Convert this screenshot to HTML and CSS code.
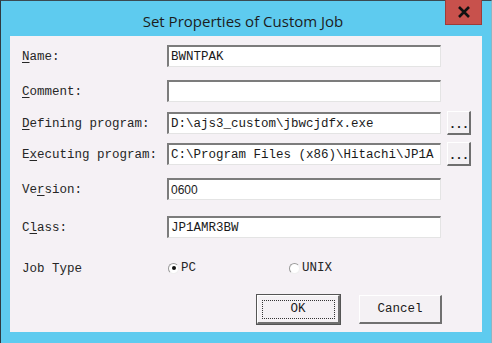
FILE: index.html
```html
<!DOCTYPE html>
<html>
<head>
<meta charset="utf-8">
<link rel="stylesheet" href="styles.css">
</head>
<body>
<div class="window">
  <div class="titlebar">
    <span class="title">Set Properties of Custom Job</span>
    <div class="close">
      <svg width="14" height="12" viewBox="0 0 14 12"><path d="M2 1 L12 11 M12 1 L2 11" stroke="#111" stroke-width="2.6" fill="none"/></svg>
    </div>
  </div>
  <div class="client">
    <div class="row r1">
      <label class="lbl"><u>N</u>ame:</label>
      <div class="field mono">BWNTPAK</div>
    </div>
    <div class="row r2">
      <label class="lbl"><u>C</u>omment:</label>
      <div class="field mono"></div>
    </div>
    <div class="row r3">
      <label class="lbl"><u>D</u>efining program:</label>
      <div class="field mono">D:\ajs3_custom\jbwcjdfx.exe</div>
      <div class="browse">...</div>
    </div>
    <div class="row r4">
      <label class="lbl">E<u>x</u>ecuting program:</label>
      <div class="field mono">C:\Program Files (x86)\Hitachi\JP1A</div>
      <div class="browse">...</div>
    </div>
    <div class="row r5">
      <label class="lbl">Ve<u>r</u>sion:</label>
      <div class="field sans">0600</div>
    </div>
    <div class="row r6">
      <label class="lbl">C<u>l</u>ass:</label>
      <div class="field mono">JP1AMR3BW</div>
    </div>
    <div class="row jobtype">
      <span class="lbl">Job Type</span>
      <div class="radios">
        <span class="radio"><span class="dot on"></span>PC</span>
        <span class="radio"><span class="dot"></span>UNIX</span>
      </div>
    </div>
    <div class="buttons">
      <div class="btn default"><span class="focus">OK</span></div>
      <div class="btn">Cancel</div>
    </div>
  </div>
</div>
</body>
</html>
```

FILE: styles.css
```css
html, body {
  margin: 0;
  padding: 0;
  background: #ffffff;
}

.window {
  width: 490px;
  height: 342px;
  background: #5ecbef;
  border-left: 1px solid #2e3a40;
  border-top: 1px solid #3a4a52;
  border-right: 1px solid #8ab7c8;
  display: flex;
  flex-direction: column;
}

.titlebar {
  height: 35px;
  position: relative;
  display: flex;
  align-items: center;
  justify-content: center;
}

.title {
  font-family: "Open Sans", "Noto Sans", sans-serif;
  font-size: 15px;
  color: #1c1c1c;
  margin-top: 4px;
  margin-left: -6px;
}

.close {
  position: absolute;
  top: -1px;
  left: 444px;
  width: 37px;
  height: 25px;
  background: #c8514c;
  border: 1px solid #9e3b38;
  border-top: none;
  display: flex;
  align-items: center;
  justify-content: center;
  box-sizing: border-box;
}

.client {
  margin: 0 9px 0 9px;
  height: 296px;
  background: #f5f1f5;
  padding: 9px 0 0 12px;
  box-sizing: border-box;
  font-family: "Liberation Mono", "Courier New", monospace;
  font-size: 12.5px;
  color: #262626;
}

.row {
  display: flex;
  align-items: center;
  height: 22px;
}

.r1 { margin-top: 0; }
.r2 { margin-top: 13px; }
.r3 { margin-top: 10px; }
.r4 { margin-top: 9px; }
.r5 { margin-top: 13px; }
.r6 { margin-top: 16px; }

.lbl {
  width: 145px;
  flex: none;
  white-space: nowrap;
  padding-top: 1px;
}

.lbl u {
  text-decoration-thickness: 1px;
  text-underline-offset: 2px;
}

.field {
  width: 274px;
  height: 22px;
  box-sizing: border-box;
  background: #ffffff;
  border-top: 2px solid #7c7c7c;
  border-left: 2px solid #7c7c7c;
  border-right: 1px solid #e4e4e4;
  border-bottom: 1px solid #e4e4e4;
  padding: 1px 2px 0 2px;
  line-height: 18px;
  white-space: nowrap;
  overflow: hidden;
  color: #1a1a1a;
}

.sans {
  font-family: "Liberation Sans", Arial, sans-serif;
  font-size: 12px;
}

.browse {
  margin-left: 6px;
  width: 24px;
  height: 24px;
  box-sizing: border-box;
  background: #f3f0f3;
  border-top: 1px solid #ffffff;
  border-left: 1px solid #ffffff;
  border-right: 2px solid #6f6f6f;
  border-bottom: 2px solid #6f6f6f;
  display: flex;
  align-items: flex-end;
  justify-content: center;
  line-height: 16px;
  font-weight: bold;
  letter-spacing: -1px;
  color: #1a1a1a;
}

.jobtype {
  margin-top: 22px;
  height: 16px;
}

.radios {
  display: flex;
  margin-left: 1px;
}

.radio {
  display: flex;
  align-items: center;
  width: 121px;
}

.dot {
  width: 11px;
  height: 11px;
  box-sizing: border-box;
  border-radius: 50%;
  border: 1px solid #9a9a9a;
  border-right-color: #f0f0f0;
  border-bottom-color: #f0f0f0;
  background: #ffffff;
  margin-right: 2px;
  position: relative;
}

.dot.on::after {
  content: "";
  position: absolute;
  left: 2.5px;
  top: 2.5px;
  width: 4px;
  height: 4px;
  border-radius: 50%;
  background: #111;
}

.buttons {
  display: flex;
  margin-top: 19px;
  margin-left: 235px;
  gap: 19px;
}

.btn {
  width: 83px;
  height: 29px;
  box-sizing: border-box;
  background: #f4f1f4;
  border-top: 1px solid #ffffff;
  border-left: 1px solid #ffffff;
  border-right: 2px solid #707070;
  border-bottom: 2px solid #707070;
  display: flex;
  align-items: center;
  justify-content: center;
  color: #1a1a1a;
}

.btn.default {
  outline: 1px solid #555;
}

.focus {
  width: 73px;
  height: 19px;
  box-sizing: border-box;
  border: 1px dotted #333;
  display: flex;
  align-items: center;
  justify-content: center;
}
```
